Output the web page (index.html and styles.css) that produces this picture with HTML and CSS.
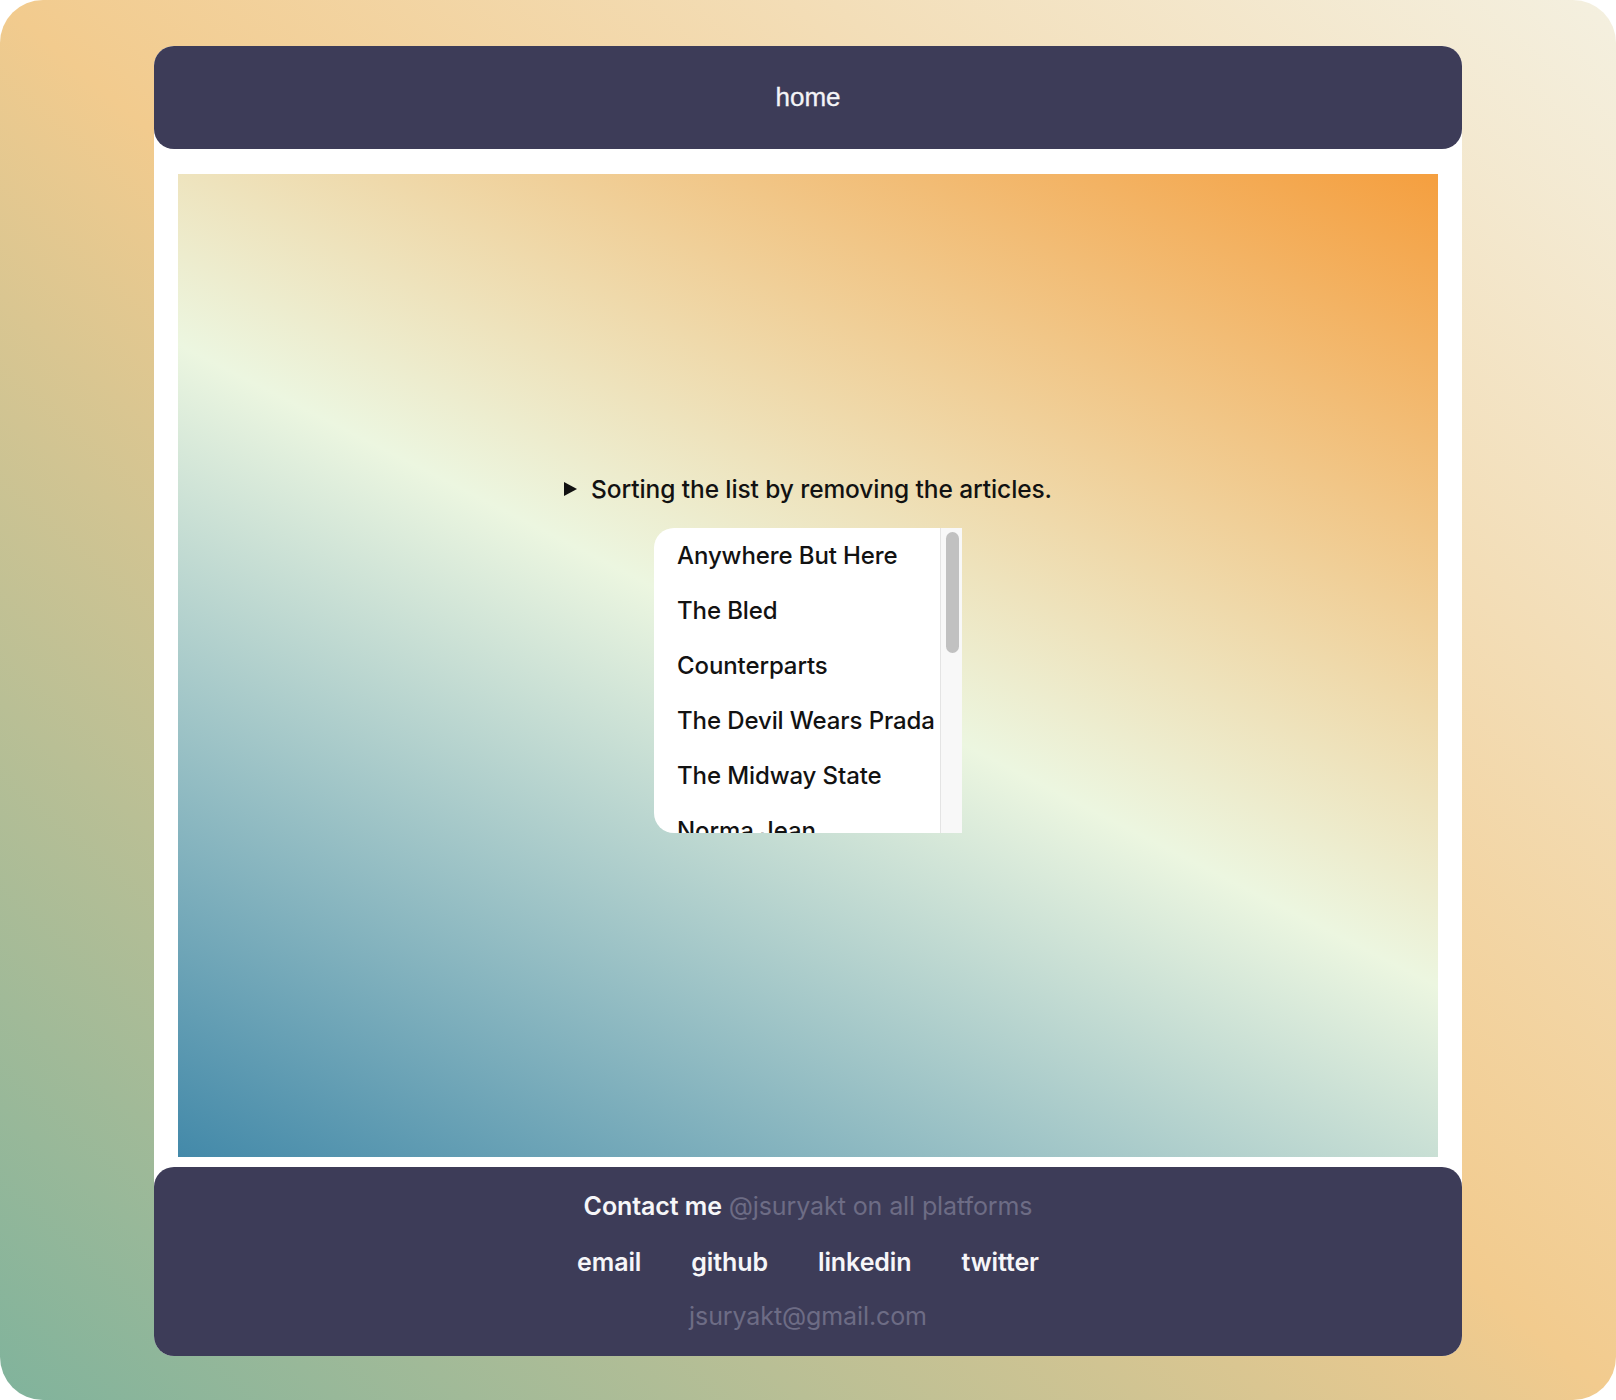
FILE: index.html
```html
<!DOCTYPE html>
<html lang="en">
<head>
<meta charset="utf-8">
<title>Sort without articles</title>
<link rel="stylesheet" href="styles.css">
</head>
<body>
<div class="frame">
  <div class="card">
    <header class="topbar"><a class="home" href="#">home</a></header>
    <main class="stage">
      <div class="summary"><span class="tri"></span><span>Sorting the list by removing the articles.</span></div>
      <div class="listbox">
        <ul class="bands">
          <li>Anywhere But Here</li>
          <li>The Bled</li>
          <li>Counterparts</li>
          <li>The Devil Wears Prada</li>
          <li>The Midway State</li>
          <li>Norma Jean</li>
          <li>Oh, Sleeper</li>
          <li>An Old Dog</li>
          <li>Pierce the Veil</li>
          <li>The Plot in You</li>
          <li>Say Anything</li>
          <li>A Skylit Drive</li>
          <li>We Came as Romans</li>
        </ul>
        <div class="scrollbar"><div class="thumb"></div></div>
      </div>
    </main>
    <footer class="contact">
      <p class="line"><strong>Contact me</strong> <span class="muted">@jsuryakt on all platforms</span></p>
      <nav class="links">
        <a href="#">email</a>
        <a href="#">github</a>
        <a href="#">linkedin</a>
        <a href="#">twitter</a>
      </nav>
      <p class="line muted">jsuryakt@gmail.com</p>
    </footer>
  </div>
</div>
</body>
</html>
```
FILE: styles.css
```css
* { box-sizing: border-box; }
html, body { margin: 0; padding: 0; background: #ffffff; }
body { font-family: Inter, "Noto Sans", sans-serif; color: #111; }

.frame {
  width: 1616px;
  min-height: 1400px;
  border-radius: 43px;
  padding: 46px 154px 44px;
  background: linear-gradient(to top right, #80b39c 0%, #f2cb8e 50%, #f4f0e0 100%);
}

.card {
  background: #ffffff;
  border-radius: 20px;
  display: flex;
  flex-direction: column;
}

.topbar {
  height: 103px;
  background: #3d3c58;
  border-radius: 20px;
  display: flex;
  align-items: center;
  justify-content: center;
}
.home {
  font-family: "Liberation Sans", Arial, sans-serif;
  font-size: 26px;
  color: #f4f4f6;
  text-decoration: none;
  -webkit-text-stroke: 0.3px #f4f4f6;
}

.stage {
  margin: 25px 24px 10px;
  height: 983px;
  padding-top: 300px;
  display: flex;
  flex-direction: column;
  align-items: center;
  background: linear-gradient(27deg, #4389a9 0%, #ecf6e0 50%, #f59f3f 100%);
}

.summary {
  display: flex;
  align-items: center;
  gap: 14px;
  font-size: 24.5px;
  font-weight: 500;
  line-height: 30px;
  letter-spacing: -0.1px;
  color: #121212;
  margin-bottom: 24px;
}
.tri {
  width: 0;
  height: 0;
  border-left: 13px solid #111;
  border-top: 7px solid transparent;
  border-bottom: 7px solid transparent;
}

.listbox {
  display: flex;
  width: 308px;
  height: 305px;
  background: #ffffff;
  border-radius: 20px 0 0 20px;
  overflow: hidden;
}
.bands {
  flex: 1;
  list-style: none;
  margin: 0;
  padding: 0 0 0 23px;
  overflow: hidden;
}
.bands li {
  height: 55px;
  line-height: 55px;
  font-size: 24px;
  font-weight: 500;
  letter-spacing: -0.1px;
  white-space: nowrap;
  color: #121212;
}
.scrollbar {
  width: 22px;
  flex: none;
  background: #f8f8f8;
  border-left: 1px solid #e4e4e4;
  padding: 4px 3px 0 5px;
}
.thumb {
  height: 121px;
  background: #c1c1c1;
  border-radius: 7px;
}

.contact {
  background: #3d3c58;
  border-radius: 20px;
  padding: 12px 0;
  display: flex;
  flex-direction: column;
  align-items: center;
}
.line {
  margin: 0;
  height: 55px;
  line-height: 55px;
  font-size: 25px;
  letter-spacing: -0.1px;
}
.line strong { color: #f6f6f8; font-weight: 600; }
.muted { color: #6d6c85; }
.links {
  display: flex;
  gap: 50px;
  height: 55px;
  align-items: center;
}
.links a {
  font-size: 25px;
  font-weight: 600;
  letter-spacing: -0.1px;
  color: #f6f6f8;
  text-decoration: none;
}
```
